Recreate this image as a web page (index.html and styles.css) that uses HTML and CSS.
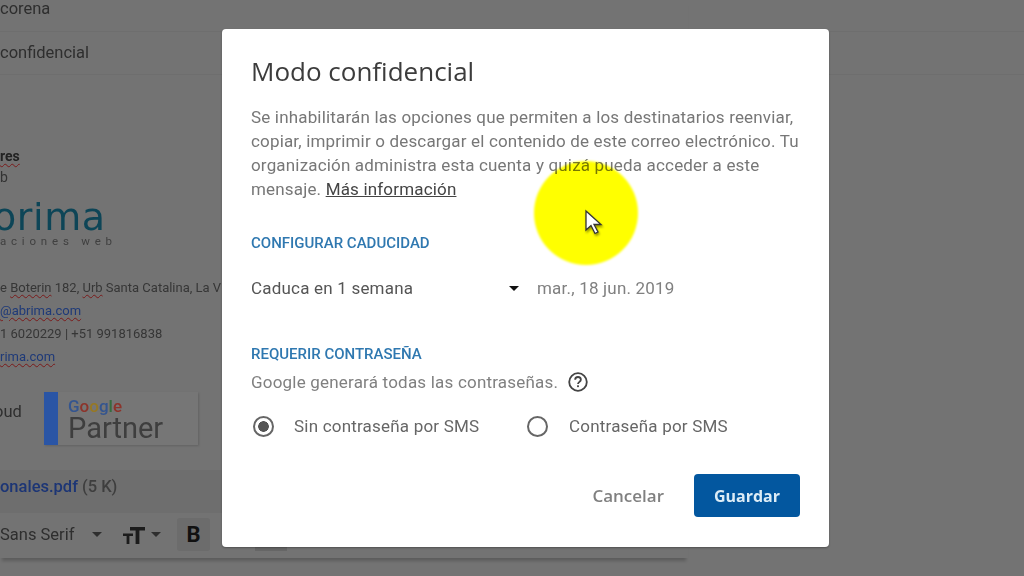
FILE: index.html
```html
<!DOCTYPE html>
<html>
<head>
    <meta charset="utf-8">
    <link rel="stylesheet" href="styles.css">
</head>
<body>
    <div class="compose">
        <div class="field">corena</div>
        <div class="field field-line">confidencial</div>
        <div class="signature">
            <div class="sig-name"><span class="typo">res</span></div>
            <div class="sig-role">b</div>
            <div class="logo">
                <div class="logo-name">orima</div>
                <div class="logo-sub">aciones web</div>
            </div>
            <div class="sig-line"><span>e <span class="typo">Boterin</span> 182, <span class="typo">Urb</span> Santa Catalina, La V</span></div>
            <div class="sig-line"><span class="typo sig-link">@abrima.com</span></div>
            <div class="sig-line"><span>1 6020229 | +51 991816838</span></div>
            <div class="sig-line"><span class="typo sig-link">rima.com</span></div>
            <div class="badges">
                <span class="cloud">oud</span>
                <div class="partner">
                    <div class="partner-bar"></div>
                    <div class="partner-text">
                        <div class="google"><span class="g-blue">G</span><span class="g-red">o</span><span class="g-yellow">o</span><span class="g-blue">g</span><span class="g-green">l</span><span class="g-red">e</span></div>
                        <div class="partner-word">Partner</div>
                    </div>
                </div>
            </div>
        </div>
        <div class="attachment"><span class="file-name">onales.pdf</span> <span class="file-size">(5 K)</span></div>
        <div class="toolbar">
            <span class="font-name">Sans Serif</span>
            <span class="caret"></span>
            <span class="size-icon"><svg width="24" height="20" viewBox="0 0 24 20"><path d="M8 2h15v3.4h-5.6V19h-3.8V5.4H8zM1 8.5h10v2.6H7.4V19H4.6v-7.9H1z" fill="#1c1c1c"/></svg></span>
            <span class="caret"></span>
            <span class="bold-btn">B</span>
            <span class="tool-active"></span>
        </div>
    </div>

    <div class="dialog">
        <h1 class="dialog-title">Modo confidencial</h1>
        <p class="dialog-text">Se inhabilitarán las opciones que permiten a los destinatarios reenviar, copiar, imprimir o descargar el contenido de este correo electrónico. Tu organización administra esta cuenta y quizá pueda acceder a este mensaje. <a class="more-link">Más información</a></p>

        <h2 class="section-title section-expiry">CONFIGURAR CADUCIDAD</h2>
        <div class="expiry-row">
            <div class="select">
                <span>Caduca en 1 semana</span>
                <span class="select-caret"></span>
            </div>
            <span class="expiry-date">mar., 18 jun. 2019</span>
        </div>

        <h2 class="section-title section-pass">REQUERIR CONTRASEÑA</h2>
        <div class="pass-note">
            <span>Google generará todas las contraseñas.</span>
            <svg class="help-icon" width="22" height="22" viewBox="0 0 24 24"><circle cx="12" cy="12" r="9.6" fill="none" stroke="#444" stroke-width="2"/><path d="M8.9 9.6a3.1 3.1 0 0 1 6.2 0c0 2.2-3.1 2.4-3.1 4.7" fill="none" stroke="#444" stroke-width="2"/><rect x="11" y="15.6" width="2" height="2" fill="#444"/></svg>
        </div>
        <div class="radio-row">
            <label class="radio-item radio-first"><span class="radio radio-on"></span>Sin contraseña por SMS</label>
            <label class="radio-item"><span class="radio"></span>Contraseña por SMS</label>
        </div>

        <div class="dialog-actions">
            <button class="btn-cancel">Cancelar</button>
            <button class="btn-save">Guardar</button>
        </div>
    </div>

    <div class="highlight">
        <svg class="cursor" width="20" height="28" viewBox="0 0 20 28"><path d="M2 2l0 19 5-4.5 4 8 3-1.5-4-7.5h7z" fill="#fff" stroke="#333" stroke-width="1.3"/></svg>
    </div>
</body>
</html>
```

FILE: styles.css
```css
html, body {
    height: 100%;
}
body {
    margin: 0;
    overflow: hidden;
    background-color: #737373;
    font-family: Roboto, sans-serif;
    color: #333;
}

/* compose window behind the dialog */
.compose {
    width: 688px;
    height: 558px;
    background-color: #737373;
    box-shadow: 0 5px 3px -2px rgba(0, 0, 0, 0.2);
    filter: blur(0.5px);
}
.field {
    height: 31px;
    font-size: 16.5px;
    line-height: 18px;
    color: #2e2e2e;
}
.field-line {
    width: 1024px;
    height: 44px;
    padding-top: 13px;
    box-sizing: border-box;
    line-height: 16px;
    border-top: 1px solid #6e6e6e;
    border-bottom: 1px solid #6e6e6e;
}
.signature {
    padding-top: 71px;
    height: 395px;
    box-sizing: border-box;
}
.typo {
    text-decoration: underline wavy #7a1a1a 1px;
    text-underline-offset: 2px;
}
.sig-name {
    font-size: 14px;
    font-weight: 700;
    line-height: 20px;
    color: #222;
}
.sig-role {
    font-size: 14px;
    line-height: 22px;
    color: #333;
}
.logo {
    height: 88px;
    padding-top: 13px;
    box-sizing: border-box;
    overflow: hidden;
}
.logo-name {
    margin-left: -7px;
    font-family: "DejaVu Sans", sans-serif;
    font-size: 38px;
    line-height: 32px;
    letter-spacing: 0.6px;
    color: #0d4557;
}
.logo-sub {
    margin-top: 1px;
    font-size: 11.5px;
    line-height: 14px;
    letter-spacing: 4.8px;
    color: #404040;
}
.sig-line {
    font-size: 13px;
    line-height: 23px;
    white-space: nowrap;
    color: #363636;
}
.sig-link {
    color: #1f3a78;
}
.badges {
    display: flex;
    align-items: center;
    margin-top: 23px;
    height: 54px;
}
.cloud {
    width: 44px;
    margin-bottom: 13px;
    font-size: 16.5px;
    text-indent: -6px;
    color: #2e2e2e;
}
.partner {
    display: flex;
    width: 154px;
    height: 53px;
    background-color: #767676;
    box-shadow: 1px 1px 2px rgba(0, 0, 0, 0.15);
}
.partner-bar {
    width: 14px;
    background-color: #2a55a5;
}
.partner-text {
    padding: 6px 0 0 10px;
}
.google {
    font-size: 17px;
    line-height: 17px;
    font-weight: 500;
}
.g-blue { color: #34558f; }
.g-red { color: #8c342b; }
.g-yellow { color: #977824; }
.g-green { color: #366d3e; }
.partner-word {
    font-size: 29px;
    line-height: 27px;
    color: #3e3e3e;
}
.attachment {
    height: 43px;
    display: flex;
    align-items: flex-start;
    gap: 4px;
    padding-top: 7px;
    box-sizing: border-box;
    font-size: 16.5px;
    font-weight: 500;
    background-color: #6e6e6e;
}
.file-name {
    color: #1c3575;
}
.file-size {
    color: #3e3e3e;
}
.toolbar {
    display: flex;
    align-items: center;
    height: 45px;
    padding-bottom: 2px;
    box-sizing: border-box;
    background-color: #737373;
    font-size: 16.5px;
    color: #2e2e2e;
}
.font-name {
    width: 92px;
}
.caret {
    width: 0;
    height: 0;
    border-left: 5px solid transparent;
    border-right: 5px solid transparent;
    border-top: 5px solid #2e2e2e;
}
.size-icon {
    display: flex;
    margin-left: 20px;
    margin-right: 5px;
}
.bold-btn {
    margin-left: 16px;
    width: 33px;
    height: 33px;
    line-height: 33px;
    text-align: center;
    background-color: #6c6c6c;
    border-radius: 3px;
    font-size: 22px;
    font-weight: 700;
    color: #111;
}
.tool-active {
    margin-left: 45px;
    width: 32px;
    height: 33px;
    background-color: #666;
}

/* confidential mode dialog */
.dialog {
    position: absolute;
    left: 222px;
    top: 29px;
    width: 607px;
    height: 518px;
    box-sizing: border-box;
    padding: 0 29px;
    background-color: #fff;
    border-radius: 4px;
    box-shadow: 0 1px 2px rgba(0, 0, 0, 0.3);
    filter: blur(0.3px);
}
.dialog-title {
    margin: 26px 0 0;
    font-family: "Open Sans", sans-serif;
    font-size: 26px;
    font-weight: 400;
    line-height: 32px;
    color: #3c3c3c;
}
.dialog-text {
    margin: 18px -4px 0 0;
    font-size: 17px;
    line-height: 24px;
    letter-spacing: 0.17px;
    color: #777;
}
.more-link {
    color: #444;
    text-decoration: underline;
}
.section-title {
    margin: 0;
    font-size: 15px;
    font-weight: 500;
    line-height: 18px;
    color: #2f78b0;
}
.section-expiry {
    margin-top: 33px;
}
.expiry-row {
    display: flex;
    align-items: center;
    margin-top: 22px;
    height: 28px;
    font-size: 17px;
    letter-spacing: 0.2px;
}
.select {
    display: flex;
    align-items: center;
    justify-content: space-between;
    width: 268px;
    color: #555;
}
.select-caret {
    width: 0;
    height: 0;
    border-left: 5px solid transparent;
    border-right: 5px solid transparent;
    border-top: 5px solid #111;
}
.expiry-date {
    margin-left: 18px;
    color: #808080;
}
.section-pass {
    margin-top: 43px;
}
.pass-note {
    display: flex;
    align-items: center;
    gap: 9px;
    margin-top: 7px;
    height: 24px;
    font-size: 17px;
    letter-spacing: 0.2px;
    color: #808080;
}
.help-icon {
    flex: none;
}
.radio-row {
    display: flex;
    margin-top: 19px;
    height: 26px;
    align-items: center;
    font-size: 17px;
    letter-spacing: 0.2px;
    color: #666;
}
.radio-item {
    display: flex;
    align-items: center;
}
.radio-first {
    width: 276px;
}
.radio {
    box-sizing: border-box;
    width: 21px;
    height: 21px;
    margin: 0 20px 0 2px;
    border: 2px solid #666;
    border-radius: 50%;
}
.radio-item + .radio-item .radio {
    margin: 0 21px 0 0;
}
.radio-on {
    background: radial-gradient(circle, #555 0, #555 5px, #fff 5.6px);
}
.dialog-actions {
    display: flex;
    justify-content: flex-end;
    align-items: center;
    gap: 30px;
    margin-top: 35px;
}
.btn-cancel {
    padding: 0;
    border: none;
    background: none;
    font-family: "Open Sans", sans-serif;
    font-size: 17px;
    font-weight: 600;
    color: #808080;
}
.btn-save {
    width: 106px;
    height: 43px;
    padding: 0;
    border: none;
    border-radius: 4px;
    background-color: #03579f;
    font-family: "Open Sans", sans-serif;
    font-size: 16px;
    font-weight: 700;
    color: #dcecf6;
}

/* recording highlight around the pointer */
.highlight {
    position: absolute;
    left: 534px;
    top: 161px;
    width: 104px;
    height: 104px;
}
.highlight::before {
    content: "";
    display: block;
    width: 100%;
    height: 100%;
    border-radius: 50%;
    background-color: #ffff00;
    mix-blend-mode: multiply;
    filter: blur(0.8px);
}
.cursor {
    position: absolute;
    left: 50px;
    top: 48px;
    filter: drop-shadow(1px 2px 1px rgba(0, 0, 0, 0.4));
}
```
